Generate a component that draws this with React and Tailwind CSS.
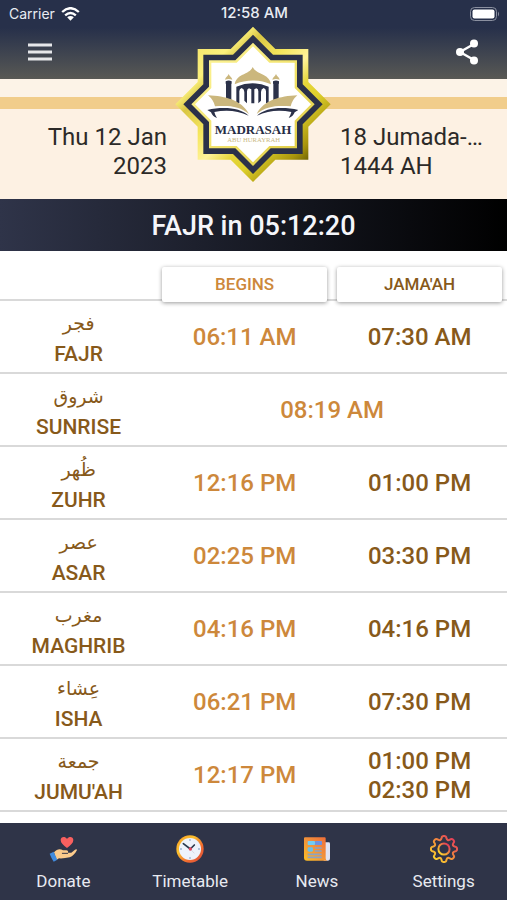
import React from "react";

const prayers = [
  { arabic: "فجر", name: "FAJR", begins: "06:11 AM", jamaah: ["07:30 AM"] },
  { arabic: "شروق", name: "SUNRISE", begins: "08:19 AM", jamaah: [] },
  { arabic: "ظُهر", name: "ZUHR", begins: "12:16 PM", jamaah: ["01:00 PM"] },
  { arabic: "عصر", name: "ASAR", begins: "02:25 PM", jamaah: ["03:30 PM"] },
  { arabic: "مغرب", name: "MAGHRIB", begins: "04:16 PM", jamaah: ["04:16 PM"] },
  { arabic: "عِشاء", name: "ISHA", begins: "06:21 PM", jamaah: ["07:30 PM"] },
  {
    arabic: "جمعة",
    name: "JUMU'AH",
    begins: "12:17 PM",
    jamaah: ["01:00 PM", "02:30 PM"],
  },
];

// eight pointed star: a square (half side s) crossed with a diamond (radius r)
function starPoints(cx, cy, s, r) {
  const n = r - s;
  return [
    [0, -r], [n, -s], [s, -s], [s, -n],
    [r, 0], [s, n], [s, s], [n, s],
    [0, r], [-n, s], [-s, s], [-s, n],
    [-r, 0], [-s, -n], [-s, -s], [-n, -s],
  ]
    .map(([x, y]) => `${cx + x},${cy + y}`)
    .join(" ");
}

function gearPath(c, outer, root) {
  const at = (r, deg) => {
    const a = (deg * Math.PI) / 180;
    return `${(c + r * Math.cos(a)).toFixed(2)} ${(c + r * Math.sin(a)).toFixed(2)}`;
  };
  let d = `M${at(outer, -7)}`;
  for (let k = 0; k < 8; k++) {
    const a = k * 45;
    d += `Q${at(outer + 0.6, a)} ${at(outer, a + 7)}`;
    d += `Q${at(outer - 0.4, a + 11)} ${at(root + 1.2, a + 13)}`;
    d += `Q${at(root - 1.2, a + 22.5)} ${at(root + 1.2, a + 32)}`;
    d += `Q${at(outer - 0.4, a + 34)} ${at(outer, a + 38)}`;
  }
  return d + "Z";
}

function Logo() {
  return (
    <svg
      viewBox="0 0 510 510"
      className="w-[170px] h-[170px]"
      role="img"
      aria-label="Madrasah Abu Hurayrah"
    >
      <defs>
        <linearGradient id="gold" x1="0" y1="0" x2="1" y2="1">
          <stop offset="0.1" stopColor="#f3e36a" />
          <stop offset="0.24" stopColor="#fbf07c" />
          <stop offset="0.3" stopColor="#d9c644" />
          <stop offset="0.42" stopColor="#f5e65c" />
          <stop offset="0.52" stopColor="#fff29a" />
          <stop offset="0.6" stopColor="#e6d63a" />
          <stop offset="0.68" stopColor="#ded02c" />
          <stop offset="0.8" stopColor="#a8940c" />
          <stop offset="0.86" stopColor="#6d6205" />
          <stop offset="1" stopColor="#8d7d0c" />
        </linearGradient>
        <linearGradient id="goldInner" x1="0" y1="0" x2="1" y2="1">
          <stop offset="0" stopColor="#fff7a0" />
          <stop offset="0.6" stopColor="#efdf62" />
          <stop offset="1" stopColor="#d8c53c" />
        </linearGradient>
      </defs>
      <polygon points={starPoints(252, 253, 166, 233)} fill="url(#gold)" />
      <polygon points={starPoints(252, 253, 149, 209)} fill="#2b3149" />
      <polygon points={starPoints(252, 253, 132, 185)} fill="url(#goldInner)" />
      <polygon points={starPoints(252, 253, 125, 174)} fill="#fff" />

      {/* dome and minarets */}
      <g fill="#cbb77d">
        <path d="M251 141C257 153 268 158 284 165C297 172 304 180 306 193C272 178 232 178 197 193C199 180 206 172 219 165C235 158 246 153 251 141Z" />
        <path d="M179 162C181 169 189 172 190 179Q179 175 168 179C169 172 177 169 179 162Z" />
        <path d="M321 162C323 169 331 172 332 179Q321 175 310 179C311 172 319 169 321 162Z" />
      </g>
      <g fill="#2b3149">
        <path d="M170 184Q179 179 188 184V191H187V236L189 249L171 240V191H170Z" />
        <path d="M312 184Q321 179 330 184V191H329V240L312 249L313 236V191H312Z" />
        <path
          fillRule="evenodd"
          d="M202 249V200Q251 180 299 200V249H291V214Q291 207 284 204Q276 207 276 216V242L268 250V214Q268 207 262 205L256 208V250H247V208L240 205Q234 207 234 214V250L226 242V216Q226 207 218 204Q211 207 211 214V249Z"
        />
      </g>

      {/* open book */}
      <path
        fill="#cbb77d"
        d="M117 226C170 229 216 239 240 282C213 258 178 256 138 259Q134 240 117 226Z"
      />
      <path
        fill="#cbb77d"
        d="M385 226C332 229 286 239 263 282C290 258 325 256 365 259Q369 240 385 226Z"
      />
      <path
        fill="#2b3149"
        d="M115 270C163 259 214 263 239 287C206 271 170 269 136 276Q138 285 144 294Q130 289 126 277Z"
      />
      <path
        fill="#2b3149"
        d="M388 270C340 259 289 263 264 287C297 271 333 269 367 276Q365 285 359 294Q373 289 377 277Z"
      />
      <text
        x="252"
        y="343"
        textAnchor="middle"
        fill="#252c45"
        fontSize="39"
        fontWeight="700"
        fontFamily="'Liberation Serif', serif"
      >
        MADRASAH
      </text>
      <text
        x="254"
        y="365"
        textAnchor="middle"
        fill="#c9b985"
        fontSize="20"
        fontFamily="'Liberation Serif', serif"
      >
        ABU HURAYRAH
      </text>
    </svg>
  );
}

function DonateIcon() {
  return (
    <svg viewBox="0 0 84 84" className="w-7 h-7" aria-hidden="true">
      <path
        fill="#f9605f"
        d="M54 39C43 31 35 24 35 15C35 5 48 3 54 12C60 3 73 5 73 15C73 24 65 31 54 39Z"
      />
      <path
        fill="#fccb8c"
        d="M15 52C24 42 33 41 42 46H52Q59 47 57 53H67L77 45Q83 41 84 45C79 55 71 64 62 67Q44 71 30 70L22 75Z"
      />
      <path
        d="M40 55H56"
        stroke="#3b3a48"
        strokeWidth="3"
        strokeLinecap="round"
      />
      <path fill="#418bdd" d="M2 56L14 50L25 74L14 80Q8 72 2 56Z" />
    </svg>
  );
}

function ClockIcon() {
  return (
    <svg viewBox="0 0 84 84" className="w-7 h-7" aria-hidden="true">
      <defs>
        <linearGradient id="rim" x1="0" y1="0" x2="1" y2="1">
          <stop offset="0" stopColor="#fa9b27" />
          <stop offset="0.35" stopColor="#fbc02d" />
          <stop offset="0.65" stopColor="#f26d2f" />
          <stop offset="1" stopColor="#d94a3d" />
        </linearGradient>
      </defs>
      <circle cx="42" cy="42" r="41" fill="url(#rim)" />
      <circle cx="42" cy="42" r="33" fill="#eef3fb" />
      <path
        d="M42 14V16M42 68V70M14 42H16M68 42H70"
        stroke="#8aa6c8"
        strokeWidth="4"
        strokeLinecap="round"
      />
      <path
        d="M43 42L22 26M43 42L55 30"
        stroke="#28394d"
        strokeWidth="5"
        strokeLinecap="round"
      />
      <path d="M43 42L55 55" stroke="#c9ccd8" strokeWidth="2" />
      <circle cx="43" cy="42" r="5" fill="#e2455c" />
    </svg>
  );
}

function NewsIcon() {
  return (
    <svg viewBox="0 0 84 84" className="w-7 h-7" aria-hidden="true">
      <defs>
        <linearGradient id="paper" x1="1" y1="0" x2="0" y2="1">
          <stop offset="0" stopColor="#ef6a38" />
          <stop offset="0.5" stopColor="#f2923a" />
          <stop offset="1" stopColor="#fbc024" />
        </linearGradient>
      </defs>
      <path fill="#dfe3f2" d="M62 22H77Q81 22 81 26V69Q81 77 74 77H62Z" />
      <path fill="url(#paper)" d="M3 10Q3 7 6 7H65Q68 7 68 10V70Q68 77 74 77H12Q3 77 3 68Z" />
      <path
        stroke="#8ba3c4"
        strokeWidth="5"
        fill="none"
        d="M35 39H56M35 48H56M14 58H56M14 67H56"
      />
      <rect x="14" y="18" width="22" height="12" rx="2" fill="#72cdf2" />
      <rect x="36" y="18" width="21" height="12" rx="2" fill="#7092df" />
      <rect x="14" y="37" width="16" height="13" rx="4" fill="#68c0ea" />
    </svg>
  );
}

function GearIcon() {
  return (
    <svg viewBox="0 0 28 28" className="w-7 h-7" fill="none" aria-hidden="true">
      <defs>
        <linearGradient id="gear" x1="0" y1="1" x2="1" y2="0">
          <stop offset="0.1" stopColor="#fbd52d" />
          <stop offset="0.5" stopColor="#f08d3c" />
          <stop offset="0.9" stopColor="#e2375b" />
        </linearGradient>
      </defs>
      <g stroke="url(#gear)" strokeWidth="2" strokeLinejoin="round">
        <path d={gearPath(14, 12.8, 9.8)} />
        <circle cx="14" cy="14" r="5.6" />
      </g>
    </svg>
  );
}

const tabs = [
  { label: "Donate", href: "#donate", Icon: DonateIcon },
  { label: "Timetable", href: "#timetable", Icon: ClockIcon },
  { label: "News", href: "#news", Icon: NewsIcon },
  { label: "Settings", href: "#settings", Icon: GearIcon },
];

function StatusBar() {
  return (
    <div className="h-7 pb-px pl-[9px] pr-[7px] grid grid-cols-3 items-center text-[#e9ecf3] text-[14px] font-['Inter',sans-serif]">
      <div className="flex items-center gap-1.5">
        <span>Carrier</span>
        <svg viewBox="0 0 56 42" className="w-[19px] h-[14px]" aria-hidden="true">
          <g fill="none" stroke="#fff" strokeWidth="7">
            <path d="M3 15Q28 -8 53 15" />
            <path d="M12 25Q28 11 44 25" />
          </g>
          <path fill="#fff" d="M18 31Q28 23 38 31L28 41Z" />
        </svg>
      </div>
      <span className="text-center text-[15px] font-medium">12:58 AM</span>
      <svg
        viewBox="0 0 30 14"
        className="w-[30px] h-[14px] justify-self-end"
        aria-hidden="true"
      >
        <rect x="0.5" y="0.5" width="26" height="13" rx="4" fill="none" stroke="#8b90a0" />
        <rect x="2.5" y="2.5" width="22" height="9" rx="2" fill="#fff" />
        <path fill="#8b90a0" d="M28 4.5Q30 7 28 9.5Z" />
      </svg>
    </div>
  );
}

function App() {
  return (
    <div className="min-h-screen flex flex-col bg-white font-['Roboto',sans-serif]">
      <header className="relative">
        <div className="bg-linear-to-b from-[#27304a] from-35% to-[#595954]">
          <StatusBar />
          <div className="h-[51px] pb-1 px-[22px] flex items-center justify-between">
            <button type="button" aria-label="Menu" className="w-9 h-9 flex items-center justify-center">
              <svg viewBox="0 0 24 18" className="w-6 h-[18px]" aria-hidden="true">
                <path d="M0 2H24M0 9H24M0 16H24" stroke="#e6e7ea" strokeWidth="3" />
              </svg>
            </button>
            <button type="button" aria-label="Share" className="w-9 h-9 flex items-center justify-center">
              <svg viewBox="0 0 24 26" className="w-6 h-[26px]" aria-hidden="true">
                <path d="M19 5L5 13L19 21" fill="none" stroke="#fff" strokeWidth="2.4" />
                <circle cx="19" cy="4.5" r="4" fill="#fff" />
                <circle cx="5" cy="13" r="4" fill="#fff" />
                <circle cx="19" cy="21.5" r="4" fill="#fff" />
              </svg>
            </button>
          </div>
        </div>
        <div className="h-[18px] bg-[#fcf3e7]"></div>
        <div className="h-3 bg-[#f1cd8b]"></div>
        <div className="bg-[#fdf1e3] pt-[14px] pb-[18px] grid grid-cols-3 text-[24px] leading-[29px] text-[#2c2a28]">
          <h4 className="text-right pr-[2px]">
            Thu 12 Jan
            <br />
            2023
          </h4>
          <h4 className="col-start-3 pl-[2px] whitespace-nowrap">
            18 Jumada-…
            <br />
            1444 AH
          </h4>
        </div>
        <div className="absolute top-5 inset-x-0 flex justify-center pointer-events-none">
          <Logo />
        </div>
      </header>

      <div className="h-[52px] pt-[2px] flex items-center justify-center bg-linear-to-r/srgb from-[#2f3449] to-black">
        <h2 className="text-[27px] font-medium text-[#f5f6fa]">FAJR in 05:12:20</h2>
      </div>

      <table className="w-full table-fixed border-separate border-spacing-0 text-center font-medium text-[#87591a]">
        <thead>
          <tr>
            <td className="w-[31%] border-b-2 border-[#d9d9d9]"></td>
            <th className="pt-4 px-[5px] border-b-2 border-[#d9d9d9]">
              <div className="relative h-[35px] -mb-[3px] flex items-center justify-center bg-white rounded-xs shadow-[0_1px_4px_rgba(0,0,0,0.4)] text-[17px] font-medium text-[#cd883b]">
                BEGINS
              </div>
            </th>
            <th className="pt-4 px-[5px] border-b-2 border-[#d9d9d9]">
              <div className="relative h-[35px] -mb-[3px] flex items-center justify-center bg-white rounded-xs shadow-[0_1px_4px_rgba(0,0,0,0.4)] text-[17px] font-medium">
                JAMA'AH
              </div>
            </th>
          </tr>
        </thead>
        <tbody>
          {prayers.map((p) => (
            <tr key={p.name} className="h-[73px]">
              <th className="pt-[5px] border-b-2 border-[#d9d9d9] text-[21px] leading-[31px] font-medium">
                <span
                  lang="ar"
                  dir="rtl"
                  className="block text-[19px] font-['DejaVu_Sans',sans-serif] font-normal"
                >
                  {p.arabic}
                </span>
                {p.name}
              </th>
              <td
                colSpan={p.jamaah.length ? 1 : 2}
                className="pt-[2px] border-b-2 border-[#d9d9d9] text-[24px] leading-[29px] text-[#cd883b]"
              >
                {p.begins}
              </td>
              {p.jamaah.length > 0 && (
                <td className="pt-[2px] border-b-2 border-[#d9d9d9] text-[24px] leading-[29px]">
                  {p.jamaah.map((t) => (
                    <div key={t}>{t}</div>
                  ))}
                </td>
              )}
            </tr>
          ))}
        </tbody>
      </table>

      <nav className="mt-auto h-[77px] grid grid-cols-4 bg-[#2f3448]">
        {tabs.map(({ label, href, Icon }) => (
          <a
            key={label}
            href={href}
            className="pt-3 flex flex-col items-center gap-1.5 text-[17px] leading-[24px] text-[#e8eaf1]"
          >
            <Icon />
            {label}
          </a>
        ))}
      </nav>
    </div>
  );
}

export default App;
